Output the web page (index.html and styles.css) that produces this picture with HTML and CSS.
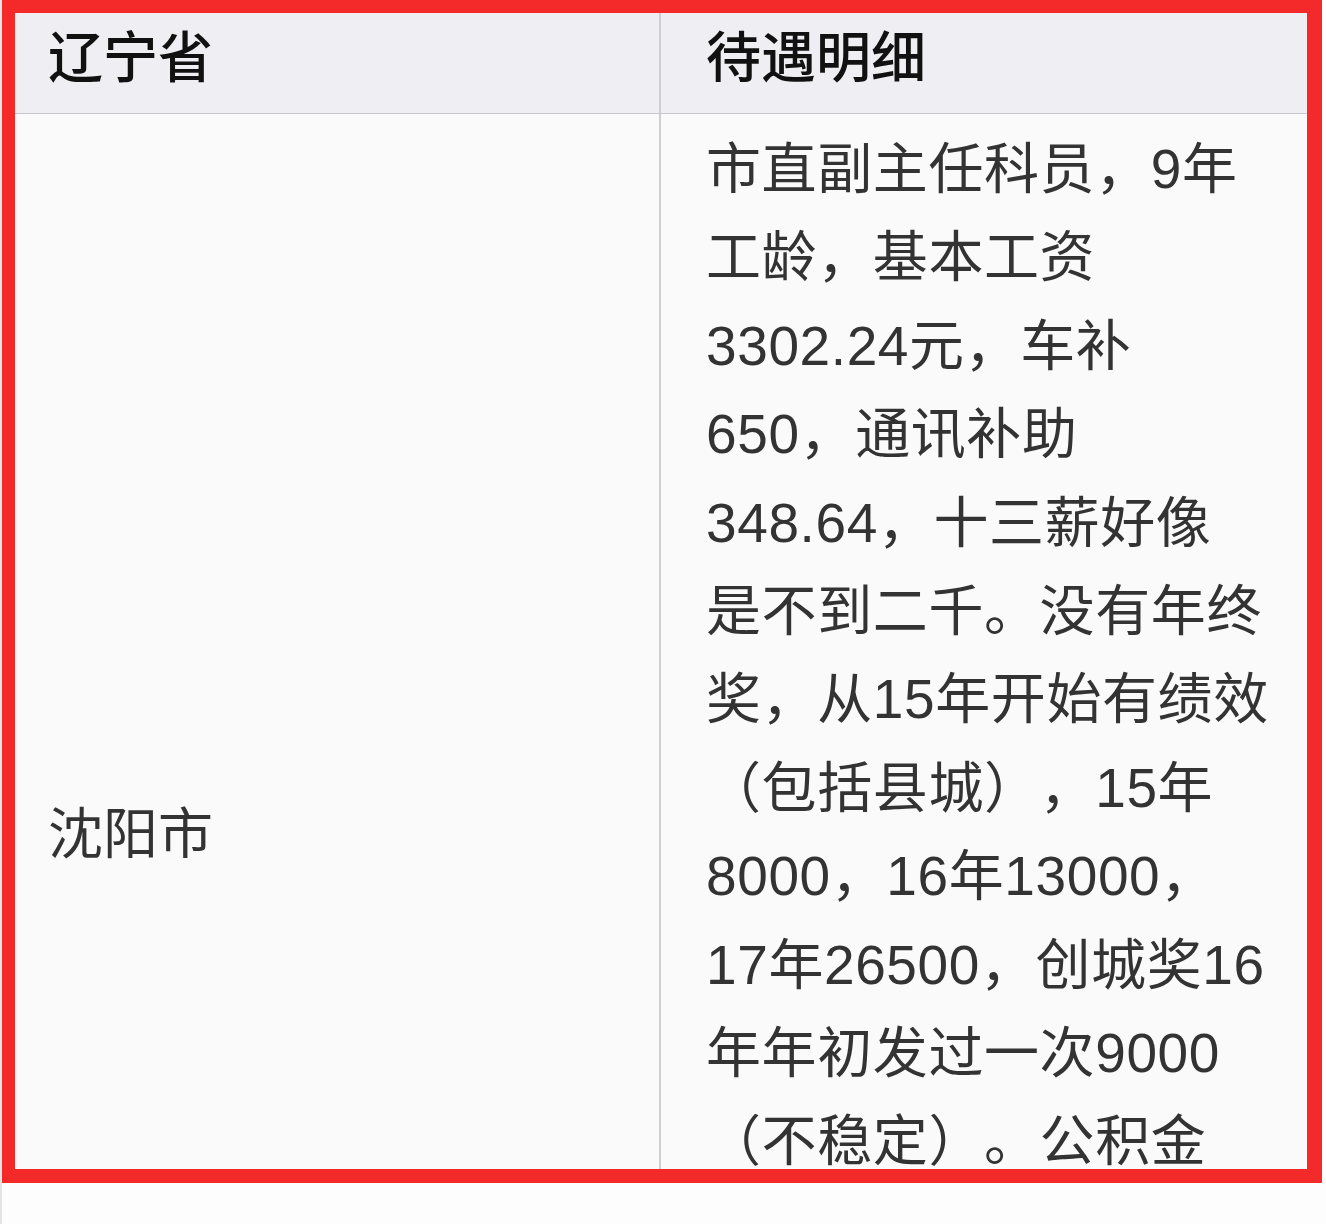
FILE: index.html
```html
<!DOCTYPE html>
<html lang="zh-CN">
<head>
<meta charset="utf-8">
<title>辽宁省 待遇明细</title>
<link rel="stylesheet" href="styles.css">
</head>
<body>
<div class="page">
  <div class="frame">
    <div class="row head">
      <div class="cell c1">辽宁省</div>
      <div class="cell c2">待遇明细</div>
    </div>
    <div class="row body">
      <div class="cell c1 city">沈阳市</div>
      <div class="cell c2 detail">市直副主任科员，9年<br>工龄，基本工资<br>3302.24元，车补<br>650，通讯补助<br>348.64，十三薪好像<br>是不到二千。没有年终<br>奖，从15年开始有绩效<br>（包括县城），15年<br>8000，16年13000，<br>17年26500，创城奖16<br>年年初发过一次9000<br>（不稳定）。公积金</div>
    </div>
  </div>
</div>
</body>
</html>
```

FILE: styles.css
```css
html, body {
  margin: 0;
  padding: 0;
  background: #fdfdfd;
}
.page {
  height: 1224px;
  border-left: 2px solid #e4e4e4;
  box-sizing: border-box;
  font-family: "Noto Sans CJK SC", "Noto Sans", sans-serif;
}
.frame {
  width: 1292px;
  height: 1156px;
  overflow: hidden;
  border-style: solid;
  border-color: #f42a2a;
  border-width: 13px 15px 14px 13px;
  background: #fafafa;
}
.row {
  display: grid;
  grid-template-columns: 646px 646px;
}
.cell {
  box-sizing: border-box;
}
.c1 {
  border-right: 2px solid #cfcfd2;
  padding-left: 33px;
}
.c2 {
  padding-left: 45px;
}
.head {
  height: 101px;
  background: #efeef3;
  border-bottom: 1px solid #c8c8cc;
  box-sizing: border-box;
}
.head .cell {
  font-size: 55px;
  font-weight: 500;
  color: #111;
  line-height: 80px;
}
.body {
  height: 1430px;
}
.city {
  display: flex;
  align-items: center;
  font-size: 55px;
  color: #333;
}
.detail {
  padding-top: 11px;
  font-family: "Liberation Sans", "Noto Sans CJK SC", sans-serif;
  font-size: 55px;
  letter-spacing: 0.6px;
  line-height: 88.4px;
  color: #333;
  white-space: nowrap;
  text-spacing-trim: space-all;
}
```
